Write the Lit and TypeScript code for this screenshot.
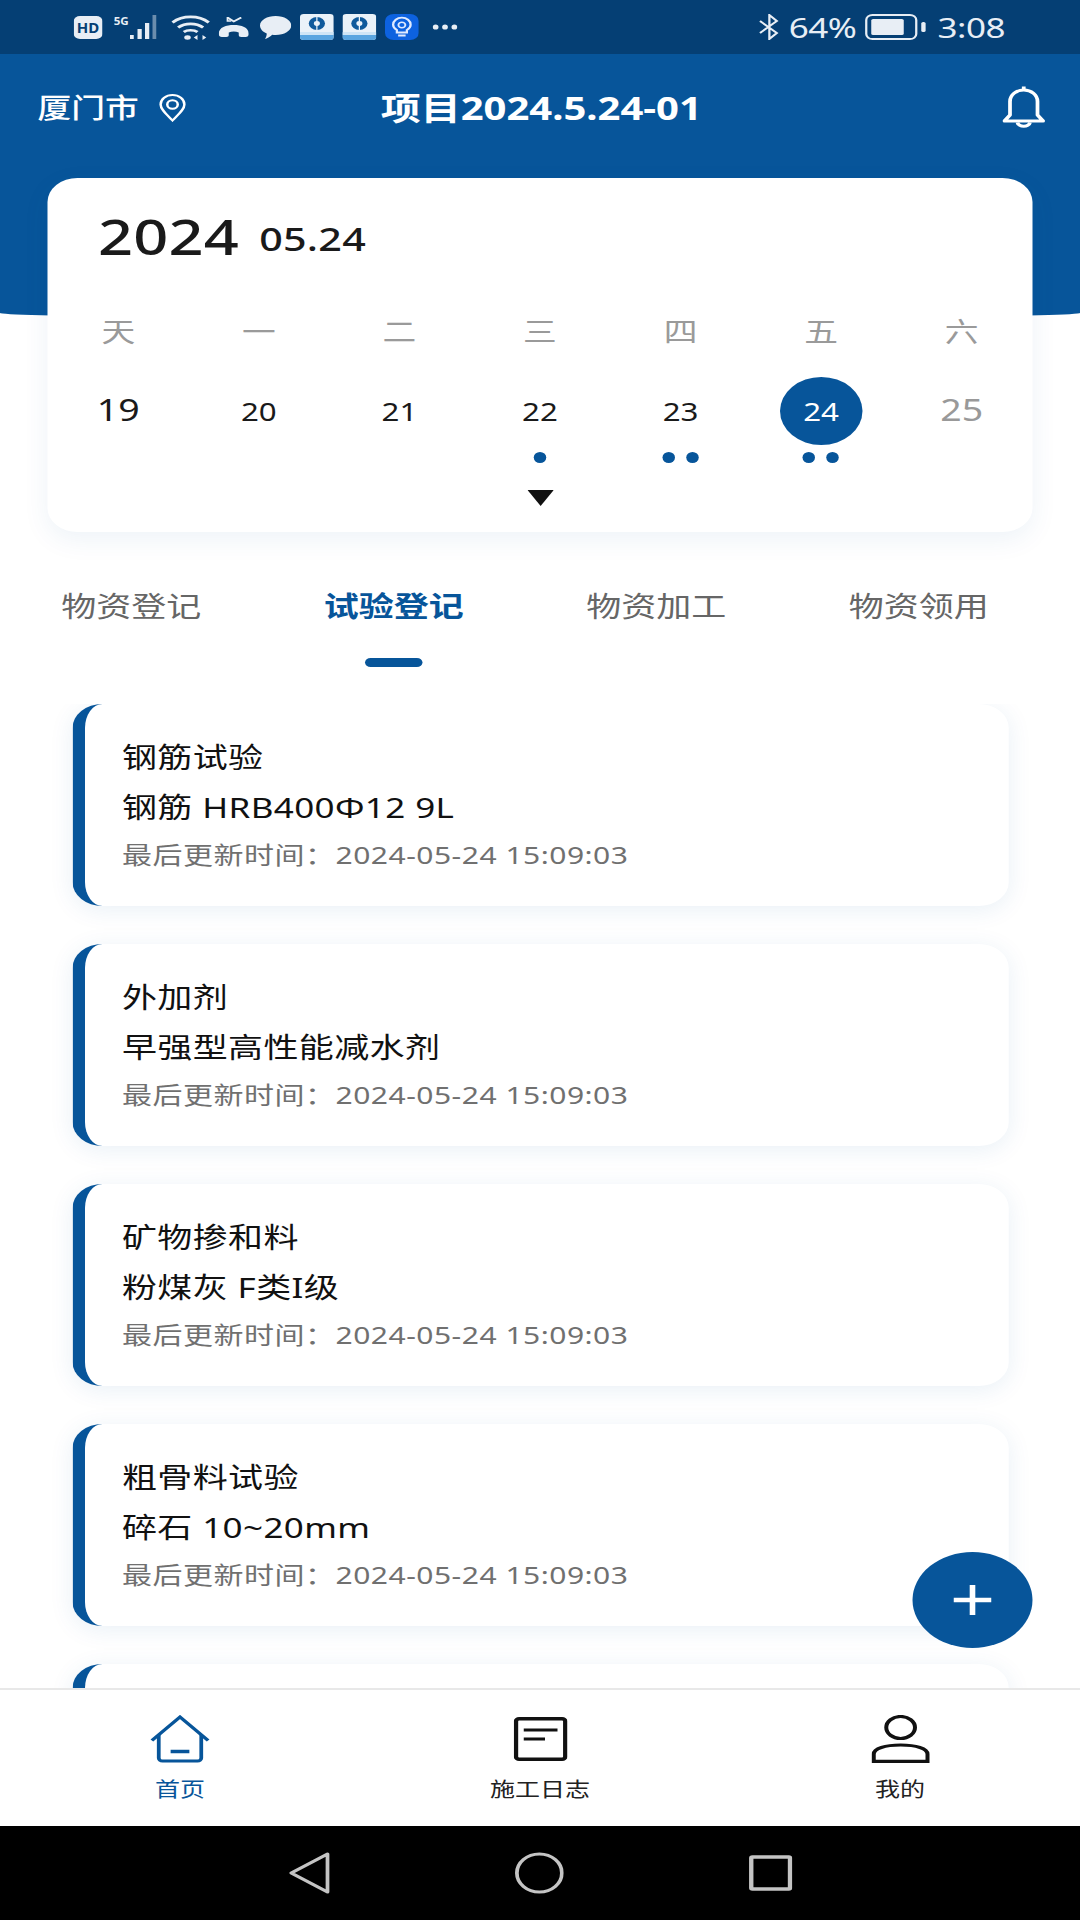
import { LitElement, html, css, svg } from "lit";
import { customElement } from "lit/decorators.js";

const WEEK = ["天", "一", "二", "三", "四", "五", "六"];
const DAYS = [
  { n: "19", dots: 0, cls: "big" },
  { n: "20", dots: 0, cls: "" },
  { n: "21", dots: 0, cls: "" },
  { n: "22", dots: 1, cls: "" },
  { n: "23", dots: 2, cls: "" },
  { n: "24", dots: 2, cls: "sel" },
  { n: "25", dots: 0, cls: "big muted" },
];
const TABS = ["物资登记", "试验登记", "物资加工", "物资领用"];
const STAMP = "最后更新时间：2024-05-24 15:09:03";
const CARDS = [
  ["钢筋试验", "钢筋 HRB400Φ12 9L"],
  ["外加剂", "早强型高性能减水剂"],
  ["矿物掺和料", "粉煤灰 F类I级"],
  ["粗骨料试验", "碎石 10~20mm"],
];

const appTile = svg`<svg class="tile" viewBox="0 0 27 26">
  <rect width="27" height="26" rx="3" fill="#eaf2f9"/>
  <path d="M0 19H27V23a3 3 0 0 1-3 3H3a3 3 0 0 1-3-3Z" fill="#5aa5e0"/>
  <rect y="18" width="27" height="3" fill="#cfe5f6"/>
  <circle cx="13.5" cy="9.5" r="6.5" fill="#0f5a9c"/>
  <circle cx="13.5" cy="9.5" r="2.4" fill="#eaf2f9"/>
  <path d="M13 1.5h1V17h-1Z" fill="#eaf2f9"/>
</svg>`;

@customElement("app-root")
export class AppRoot extends LitElement {
  static styles = css`
    :host {
      display: block;
      width: 864px;
      height: 1920px;
      overflow: hidden;
      position: relative;
      background: #fff;
      transform: scaleX(1.25);
      transform-origin: 0 0;
      font-family: "Noto Sans", "Noto Sans CJK SC", sans-serif;
      color: #1a1a1a;
    }
    * { box-sizing: border-box; }
    svg { display: block; flex: none; }

    .status {
      height: 54px;
      background: #053f74;
      color: #e8eef5;
      display: flex;
      align-items: center;
      padding: 0 60px 0 59px;
    }
    .status .hd { width: 23px; height: 23px; margin-right: 9px; }
    .status .signal { width: 38px; height: 26px; margin-right: 8px; }
    .status .wifi { width: 31px; height: 26px; margin-right: 7px; }
    .status .call { width: 24px; height: 20px; margin-right: 9px; }
    .status .bubble { width: 25px; height: 23px; margin-right: 7px; }
    .status .tile { width: 27px; height: 26px; margin-right: 7px; }
    .status .bulb { width: 27px; height: 26px; margin-right: 11px; }
    .status .more { width: 20px; height: 6px; }
    .status .spacer { flex: 1; }
    .status .bt { width: 17px; height: 26px; margin-right: 7px; }
    .status .pct, .status .time { font-size: 28px; line-height: 54px; letter-spacing: -0.4px; }
    .status .pct { margin-right: 7px; }
    .status .batt { width: 49px; height: 26px; margin-right: 9px; }

    .hero {
      height: 265px;
      background: #07559a;
      border-radius: 0 0 50% 50% / 0 0 6px 6px;
      color: #fff;
      display: grid;
      grid-template-columns: 1fr auto 1fr;
      align-items: start;
      padding: 30px 28px 0 30px;
    }
    .city { display: flex; align-items: center; gap: 16px; font-size: 27px; line-height: 48px; font-weight: 500; }
    .project { font-size: 32px; line-height: 48px; font-weight: 700; }
    .bell { justify-self: end; width: 34px; height: 44px; margin-top: 1px; }

    .calendar {
      margin: -141px 38.4px 0;
      height: 354px;
      background: #fff;
      border-radius: 24px;
      box-shadow: 0 8px 24px rgba(7, 85, 154, 0.07);
      position: relative;
      padding-top: 0;
    }
    .ymd {
      height: 134px;
      padding: 28px 0 0 40px;
      display: flex;
      align-items: baseline;
      gap: 16px;
      line-height: 60px;
    }
    .year { font-size: 49px; font-weight: 500; letter-spacing: 0.2px; }
    .md { font-size: 33px; font-weight: 500; letter-spacing: 0.2px; position: relative; top: -4px; }
    .week, .days, .dots { display: grid; grid-template-columns: repeat(7, 1fr); justify-items: center; }
    .week { height: 40px; line-height: 40px; font-size: 27px; color: #9a9a9a; }
    .days { margin-top: 25px; height: 68px; align-items: center; }
    .day { width: 66px; height: 68px; display: flex; align-items: center; justify-content: center; font-size: 25px; border-radius: 50%; }
    .day.big { font-size: 30px; padding-bottom: 4px; }
    .day.muted { color: #999; }
    .day.sel { background: #07559a; color: #fff; }
    .dots { margin-top: 7px; height: 11px; }
    .dotset { display: flex; gap: 9px; }
    .dot { width: 10px; height: 11px; border-radius: 50%; background: #07559a; }
    .arrow { width: 21px; height: 16px; margin: 27px auto 0; }

    .tabs { margin-top: 54px; width: 840px; display: grid; grid-template-columns: repeat(4, 1fr); }
    .tab { display: flex; flex-direction: column; align-items: center; font-size: 28px; line-height: 40px; color: #666; }
    .tab.on { color: #07559a; font-weight: 700; }
    .bar { margin-top: 32px; width: 46px; height: 9px; border-radius: 5px; background: transparent; }
    .tab.on .bar { background: #07559a; }

    .list {
      height: 984px;
      margin-top: 37px;
      overflow: hidden;
      display: flex;
      flex-direction: column;
      gap: 38px;
      padding: 0 56.8px 0 57.6px;
    }
    .list::after { content: ""; }
    .rec {
      flex: none;
      height: 202px;
      background: #fff;
      border-left: 10px solid #07559a;
      border-radius: 24px;
      box-shadow: 0 4px 22px rgba(7, 85, 154, 0.09);
      padding: 28px 0 0 30px;
    }
    .rec div { line-height: 50px; font-size: 28px; color: #111; letter-spacing: 0.3px; }
    .rec .stamp { line-height: 46px; font-size: 24px; color: #707070; letter-spacing: 0.4px; }

    .fab {
      position: absolute;
      left: 729.6px;
      top: 1552px;
      width: 96px;
      height: 96px;
      border-radius: 50%;
      background: #07559a;
      display: flex;
      align-items: center;
      justify-content: center;
      z-index: 2;
    }
    .fab svg { width: 32px; height: 32px; }

    .nav {
      position: relative;
      z-index: 1;
      height: 138px;
      background: #fff;
      border-top: 2px solid #e8e8e8;
      display: grid;
      grid-template-columns: repeat(3, 1fr);
      padding-top: 25px;
    }
    .item { display: flex; flex-direction: column; align-items: center; font-size: 20px; line-height: 24px; color: #222; }
    .item.on { color: #07559a; }
    .item .ico { height: 48px; display: flex; align-items: center; margin-bottom: 15px; }

    .android {
      height: 94px;
      background: #000;
      display: flex;
      justify-content: center;
      align-items: center;
      gap: 148px;
    }
    .android .b { width: 33px; height: 42px; }
    .android .c { width: 39px; height: 42px; }
    .android .s { width: 35px; height: 36px; }
  `;

  private statusBar() {
    return html`<div class="status">
      <svg class="hd" viewBox="0 0 23 23"><rect width="23" height="23" rx="5" fill="#e8eef5"/><text x="11.5" y="17" text-anchor="middle" font-size="15" font-weight="700" font-family="Noto Sans" fill="#053f74" textLength="18" lengthAdjust="spacingAndGlyphs">HD</text></svg>
      <svg class="signal" viewBox="0 0 38 26" fill="#e8eef5">
        <text x="0" y="11" font-size="11" font-weight="700" font-family="Noto Sans" textLength="12" lengthAdjust="spacingAndGlyphs">5G</text>
        <rect x="13" y="21" width="3" height="4"/><rect x="19" y="15" width="3.4" height="10"/><rect x="25" y="9" width="3.4" height="16"/><rect x="31" y="1" width="3" height="24" opacity=".45"/>
      </svg>
      <svg class="wifi" viewBox="0 0 31 26" fill="none" stroke="#e8eef5" stroke-width="2.6">
        <path d="M1 8.5C9 1 22 1 30 8.5"/><path d="M5.5 13.5C11 8.6 20 8.6 25.5 13.5"/><path d="M10 18C12.8 15.6 18.2 15.6 21 18"/>
        <ellipse cx="13" cy="23.5" rx="2.6" ry="2.2" fill="#e8eef5" stroke="none"/>
        <path d="M21 21l-3 2.5 3 2.5ZM25 21l3 2.5-3 2.5Z" fill="#e8eef5" stroke="none"/>
      </svg>
      <svg class="call" viewBox="0 0 24 20"><path d="M0 17C0 10 6 8 12 8s12 2 12 9c0 2-1 3-2.500 3H18c-1.500 0-2-1-2-2v-2.500c-2.500-1.200-5.500-1.200-8 0V18c0 1-.5 2-2 2H2.500C1 20 0 19 0 17Z" fill="#e8eef5"/><path d="M7 0.500l5 4 6-4" fill="none" stroke="#e8eef5" stroke-width="1.800"/><path d="M7 0v4h3" fill="none" stroke="#e8eef5" stroke-width="1.400"/></svg>
      <svg class="bubble" viewBox="0 0 25 23"><path d="M12.500 0C19.400 0 25 4.200 25 9.500S19.400 19 12.500 19c-1 0-1.800-.1-2.700-.2C8 21 5.500 22.600 4 23c.8-1.400 1.400-3.400 1.400-5.400C2.200 15.800 0 12.900 0 9.500 0 4.200 5.600 0 12.500 0Z" fill="#e8eef5"/></svg>
      ${appTile}${appTile}
      <svg class="bulb" viewBox="0 0 27 26" fill="none"><rect width="27" height="26" rx="7" fill="#0d62e0"/><path d="M9.500 16c-2-1.400-3-3.300-3-5.300a7 7 0 0 1 14 0c0 2-1 3.900-3 5.300v2.500h-8Z" stroke="#dfeaff" stroke-width="1.800"/><circle cx="13.500" cy="11" r="2.800" stroke="#dfeaff" stroke-width="1.500"/><path d="M10.500 21.500h6" stroke="#dfeaff" stroke-width="1.800"/></svg>
      <svg class="more" viewBox="0 0 20 6" fill="#e8eef5"><ellipse cx="2.500" cy="3" rx="2.300" ry="2.600"/><ellipse cx="10" cy="3" rx="2.300" ry="2.600"/><ellipse cx="17.500" cy="3" rx="2.300" ry="2.600"/></svg>
      <span class="spacer"></span>
      <svg class="bt" viewBox="0 0 17 26" fill="none" stroke="#e8eef5" stroke-width="1.800"><path d="M1 7l13.500 12L8.500 25V1l6 6L1 19"/></svg>
      <span class="pct">64%</span>
      <svg class="batt" viewBox="0 0 49 26" fill="none"><rect x="1" y="1" width="40" height="24" rx="5" stroke="#e8eef5" stroke-width="1.800"/><rect x="5" y="5" width="26" height="16" rx="1.500" fill="#e8eef5"/><rect x="45" y="8" width="3.500" height="10" rx="1.500" fill="#e8eef5"/></svg>
      <span class="time">3:08</span>
    </div>`;
  }

  private navIcon(i: number) {
    if (i === 0)
      return html`<svg width="48" height="48" viewBox="0 0 48 48" fill="none" stroke="#07559a" stroke-width="3"><path d="M1.500 25.500L24 2l22.500 23.500"/><path d="M7 20v23a3 3 0 0 0 3 3h28a3 3 0 0 0 3-3V20"/><path d="M16.500 36.500h15" stroke-width="3.500"/></svg>`;
    if (i === 1)
      return html`<svg width="43" height="44" viewBox="0 0 43 44" fill="none" stroke="#111" stroke-width="3.500"><rect x="1.800" y="1.800" width="39.400" height="40.400" rx="2.500"/><path d="M8 13h27M8 22h17" stroke-width="3.200"/></svg>`;
    return html`<svg width="47" height="48" viewBox="0 0 47 48" fill="none" stroke="#111" stroke-width="3.200"><ellipse cx="23.500" cy="12.500" rx="11.500" ry="11"/><path d="M2 46.400h43V39c0-5.500-9-9-21.500-9S2 33.500 2 39Z"/></svg>`;
  }

  render() {
    return html`
      ${this.statusBar()}
      <div class="hero">
        <div class="city">
          <span>厦门市</span>
          <svg width="22" height="28" viewBox="0 0 22 28" fill="none" stroke="#fff" stroke-width="2"><path d="M11 26.500C6 20 1.500 15.500 1.500 10.500a9.500 9.500 0 0 1 19 0C20.500 15.500 16 20 11 26.500Z"/><circle cx="11" cy="10.500" r="4.200"/></svg>
        </div>
        <div class="project">项目2024.5.24-01</div>
        <svg class="bell" viewBox="0 0 34 44" fill="none" stroke="#fff" stroke-width="3"><path d="M1.500 36h31L28 30V16.500C28 10 23 5 17 5S6 10 6 16.500V30Z" stroke-linejoin="round"/><path d="M17 1.500V5"/><path d="M12 37.500c.8 5 9.200 5 10 0"/></svg>
      </div>
      <div class="calendar">
        <div class="ymd"><span class="year">2024</span><span class="md">05.24</span></div>
        <div class="week">${WEEK.map((w) => html`<span>${w}</span>`)}</div>
        <div class="days">${DAYS.map((d) => html`<div class="day ${d.cls}">${d.n}</div>`)}</div>
        <div class="dots">${DAYS.map(
          (d) => html`<div class="dotset">${Array.from({ length: d.dots }, () => html`<span class="dot"></span>`)}</div>`
        )}</div>
        <svg class="arrow" viewBox="0 0 21 16"><path d="M0 0H21L10.500 16Z" fill="#111"/></svg>
      </div>
      <div class="tabs">
        ${TABS.map((t, i) => html`<div class="tab ${i === 1 ? "on" : ""}">${t}<span class="bar"></span></div>`)}
      </div>
      <div class="list">
        ${CARDS.map(
          (c) => html`<div class="rec"><div>${c[0]}</div><div>${c[1]}</div><div class="stamp">${STAMP}</div></div>`
        )}
        <div class="rec"></div>
      </div>
      <div class="fab"><svg viewBox="0 0 32 32" fill="none" stroke="#fff" stroke-width="4.500"><path d="M1 16h30M16 1v30"/></svg></div>
      <div class="nav">
        ${["首页", "施工日志", "我的"].map(
          (n, i) => html`<div class="item ${i === 0 ? "on" : ""}"><div class="ico">${this.navIcon(i)}</div>${n}</div>`
        )}
      </div>
      <div class="android">
        <svg class="b" viewBox="0 0 33 42" fill="none" stroke="#c4c4c4" stroke-width="3" stroke-linejoin="round"><path d="M31 2V40L2 21Z"/></svg>
        <svg class="c" viewBox="0 0 39 42" fill="none" stroke="#c4c4c4" stroke-width="3"><ellipse cx="19.500" cy="21" rx="18" ry="19"/></svg>
        <svg class="s" viewBox="0 0 35 36" fill="none" stroke="#c4c4c4" stroke-width="3.500" stroke-linejoin="round"><rect x="2" y="2" width="31" height="32" rx="1"/></svg>
      </div>
    `;
  }
}
